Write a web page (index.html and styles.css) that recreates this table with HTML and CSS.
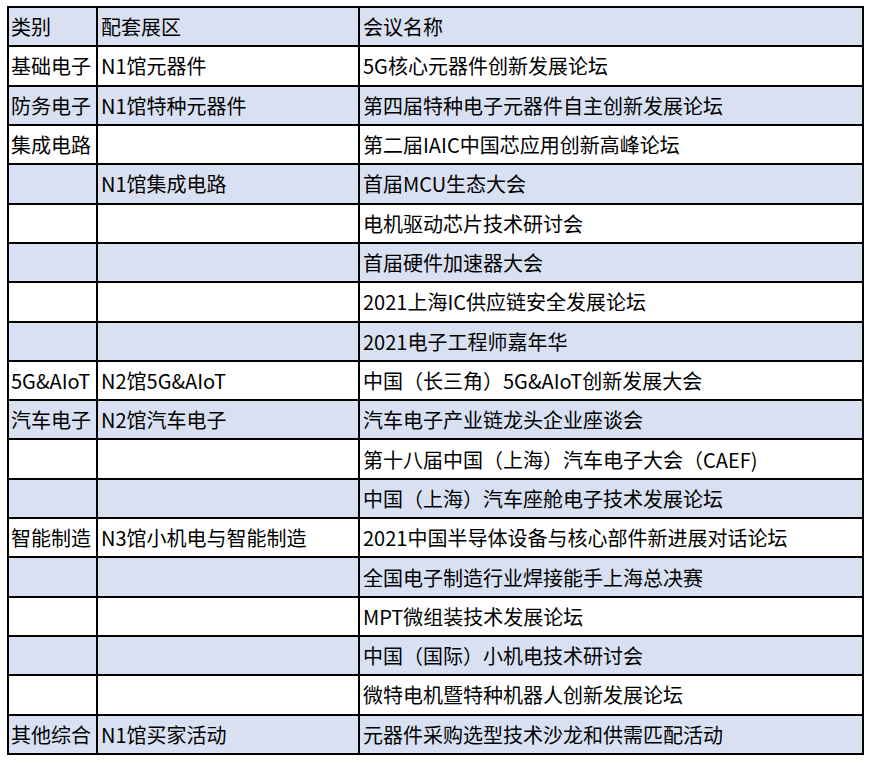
FILE: index.html
```html
<!DOCTYPE html>
<html lang="zh-CN">
<head>
<meta charset="utf-8">
<title>会议列表</title>
<link rel="stylesheet" href="styles.css">
</head>
<body>
<div class="sheet">
  <div class="row alt"><div class="cell c1">类别</div><div class="cell c2">配套展区</div><div class="cell c3">会议名称</div></div>
  <div class="row"><div class="cell c1">基础电子</div><div class="cell c2">N1馆元器件</div><div class="cell c3">5G核心元器件创新发展论坛</div></div>
  <div class="row alt"><div class="cell c1">防务电子</div><div class="cell c2">N1馆特种元器件</div><div class="cell c3">第四届特种电子元器件自主创新发展论坛</div></div>
  <div class="row"><div class="cell c1">集成电路</div><div class="cell c2"></div><div class="cell c3">第二届IAIC中国芯应用创新高峰论坛</div></div>
  <div class="row alt"><div class="cell c1"></div><div class="cell c2">N1馆集成电路</div><div class="cell c3">首届MCU生态大会</div></div>
  <div class="row"><div class="cell c1"></div><div class="cell c2"></div><div class="cell c3">电机驱动芯片技术研讨会</div></div>
  <div class="row alt"><div class="cell c1"></div><div class="cell c2"></div><div class="cell c3">首届硬件加速器大会</div></div>
  <div class="row"><div class="cell c1"></div><div class="cell c2"></div><div class="cell c3">2021上海IC供应链安全发展论坛</div></div>
  <div class="row alt"><div class="cell c1"></div><div class="cell c2"></div><div class="cell c3">2021电子工程师嘉年华</div></div>
  <div class="row"><div class="cell c1">5G&amp;AIoT</div><div class="cell c2">N2馆5G&amp;AIoT</div><div class="cell c3">中国（长三角）5G&amp;AIoT创新发展大会</div></div>
  <div class="row alt"><div class="cell c1">汽车电子</div><div class="cell c2">N2馆汽车电子</div><div class="cell c3">汽车电子产业链龙头企业座谈会</div></div>
  <div class="row"><div class="cell c1"></div><div class="cell c2"></div><div class="cell c3">第十八届中国（上海）汽车电子大会（CAEF)</div></div>
  <div class="row alt"><div class="cell c1"></div><div class="cell c2"></div><div class="cell c3">中国（上海）汽车座舱电子技术发展论坛</div></div>
  <div class="row"><div class="cell c1">智能制造</div><div class="cell c2">N3馆小机电与智能制造</div><div class="cell c3">2021中国半导体设备与核心部件新进展对话论坛</div></div>
  <div class="row alt"><div class="cell c1"></div><div class="cell c2"></div><div class="cell c3">全国电子制造行业焊接能手上海总决赛</div></div>
  <div class="row"><div class="cell c1"></div><div class="cell c2"></div><div class="cell c3">MPT微组装技术发展论坛</div></div>
  <div class="row alt"><div class="cell c1"></div><div class="cell c2"></div><div class="cell c3">中国（国际）小机电技术研讨会</div></div>
  <div class="row"><div class="cell c1"></div><div class="cell c2"></div><div class="cell c3">微特电机暨特种机器人创新发展论坛</div></div>
  <div class="row alt"><div class="cell c1">其他综合</div><div class="cell c2">N1馆买家活动</div><div class="cell c3">元器件采购选型技术沙龙和供需匹配活动</div></div>
</div>
</body>
</html>
```

FILE: styles.css
```css
html, body {
  margin: 0;
  padding: 0;
  background: #ffffff;
}

body {
  padding: 6px 0 0 7px;
  font-family: "Noto Sans CJK SC", "Noto Sans", sans-serif;
  font-size: 20px;
  color: #000000;
}

.sheet {
  box-sizing: border-box;
  width: 857px;
  height: 749px;
  border: 2px solid #000000;
  background: #000000;
  display: flex;
  flex-direction: column;
  gap: 2px;
}

.row {
  flex: 1 1 0;
  display: grid;
  grid-template-columns: 87px 260px 502px;
  column-gap: 2px;
  min-height: 0;
}

.cell {
  background: #ffffff;
  display: flex;
  align-items: center;
  white-space: nowrap;
  overflow: hidden;
  line-height: 1;
  padding-left: 3px;
  padding-top: 1px;
}

.row.alt .cell {
  background: #d9e0f2;
}

.c1 {
  padding-left: 2px;
}
```
